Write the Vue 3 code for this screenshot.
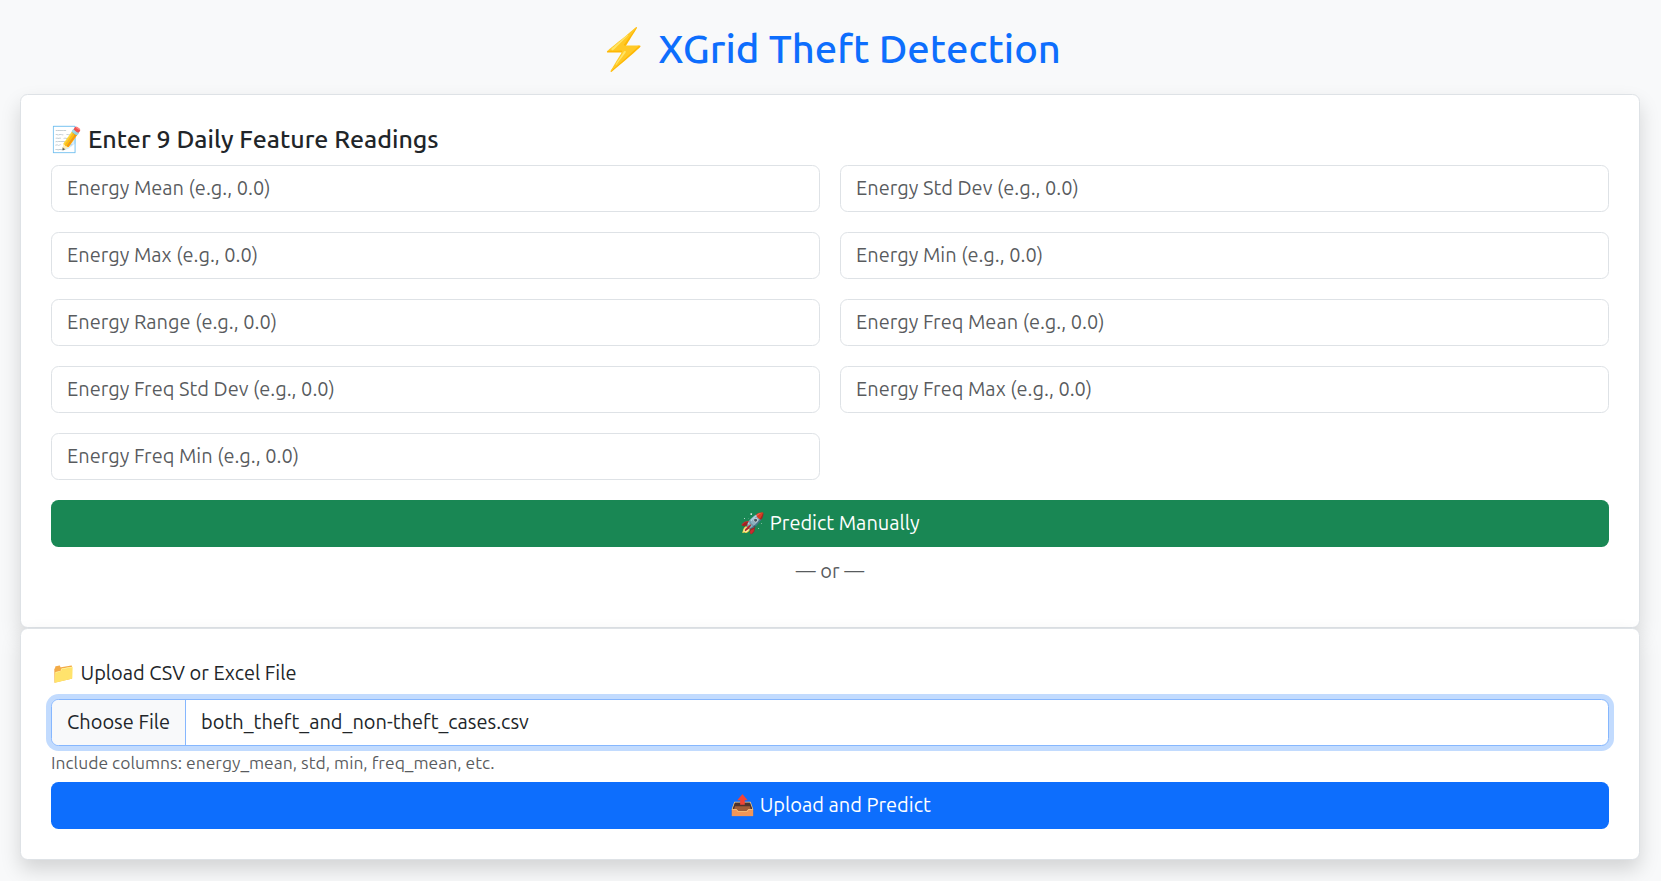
<script setup>
const fields = [
  'Energy Mean',
  'Energy Std Dev',
  'Energy Max',
  'Energy Min',
  'Energy Range',
  'Energy Freq Mean',
  'Energy Freq Std Dev',
  'Energy Freq Max',
  'Energy Freq Min',
]
</script>

<template>
  <main class="page">
    <h1 class="title">⚡ XGrid Theft Detection</h1>

    <form class="card manual" @submit.prevent>
      <h2 class="subtitle">📝 Enter 9 Daily Feature Readings</h2>
      <div class="grid">
        <input
          v-for="field in fields"
          :key="field"
          class="control"
          type="text"
          :placeholder="`${field} (e.g., 0.0)`"
        />
      </div>
      <button class="btn btn-success" type="submit">🚀 Predict Manually</button>
      <p class="separator">— or —</p>
    </form>

    <form class="card upload" @submit.prevent>
      <label class="label">📁 Upload CSV or Excel File</label>
      <div class="file" tabindex="0">
        <span class="file-button">Choose File</span>
        <span class="file-name">both_theft_and_non-theft_cases.csv</span>
      </div>
      <div class="hint">Include columns: energy_mean, std, min, freq_mean, etc.</div>
      <button class="btn btn-primary" type="submit">📤 Upload and Predict</button>
    </form>
  </main>
</template>

<style>
html {
  font-size: 20px;
}
body {
  margin: 0;
  background: #f8f9fa;
  overflow: hidden;
}
</style>

<style scoped>
.page {
  box-sizing: border-box;
  height: 881px;
  padding: 25px 21px 0 20px;
  font-family: Ubuntu, "Noto Sans", "Open Sans", "Noto Color Emoji", sans-serif;
  font-size: 20px;
  line-height: 1.5;
  color: #212529;
}
.page *,
.page *::before {
  box-sizing: border-box;
}
.title {
  margin: 0 0 21px;
  font-size: 40px;
  font-weight: 500;
  line-height: 48px;
  text-align: center;
  color: #0d6efd;
}
.card {
  position: relative;
  padding: 29px 30px 30px;
  background: #fff;
  border: 1px solid #dee2e6;
  border-radius: 7.5px;
  box-shadow: 0 10px 20px rgba(0, 0, 0, 0.15);
}
.manual {
  height: 534px;
}
.upload {
  height: 232px;
}
.subtitle {
  margin: 0 0 11px;
  font-size: 25px;
  font-weight: 500;
  line-height: 30px;
}
.grid {
  display: grid;
  grid-template-columns: 1fr 1fr;
  gap: 20px;
  margin-bottom: 20px;
}
.control {
  width: 100%;
  height: 47px;
  padding: 6.5px 15px 8.5px;
  font: inherit;
  color: #212529;
  background: #fff;
  border: 1px solid #dee2e6;
  border-radius: 7.5px;
  outline: 0;
}
.control::placeholder {
  color: rgba(33, 37, 41, 0.75);
  opacity: 1;
}
.btn {
  display: block;
  width: 100%;
  height: 47px;
  padding: 0 15px 2px;
  font: inherit;
  text-align: center;
  color: #fff;
  border: 0;
  border-radius: 7.5px;
}
.btn-success {
  background: #198754;
}
.btn-primary {
  padding-left: 16px;
  background: #0d6efd;
}
.separator {
  margin: 9px 0 0;
  text-align: center;
  color: rgba(33, 37, 41, 0.75);
}
.label {
  display: block;
  margin-bottom: 11px;
}
.file {
  display: flex;
  height: 47px;
  overflow: hidden;
  line-height: 43px;
  background: #fff;
  border: 1px solid #86b7fe;
  border-radius: 7.5px;
  box-shadow: 0 0 0 5px rgba(13, 110, 253, 0.25);
  outline: 0;
}
.file-button {
  padding: 0 15px;
  background: #f8f9fa;
  border-right: 1px solid #86b7fe;
}
.file-name {
  padding-left: 15px;
}
.hint {
  height: 26px;
  margin: 5px 0;
  font-size: 17.5px;
  line-height: 24px;
  color: rgba(33, 37, 41, 0.75);
}
</style>
